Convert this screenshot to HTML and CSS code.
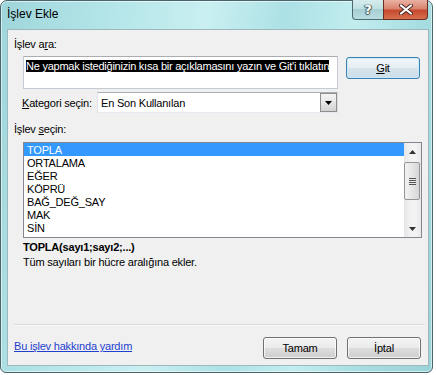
FILE: index.html
```html
<!DOCTYPE html>
<html lang="tr">
<head>
    <meta charset="UTF-8">
    <meta name="viewport" content="width=device-width, initial-scale=1.0">
    <title>İşlev Ekle</title>
    <link rel="stylesheet" href="styles.css">
</head>
<body>

    <div class="window">
        <div class="titlebar">
            <span class="title">İşlev Ekle</span>
            <div class="caption-buttons">
                <div class="cap-btn cap-help"><span>?</span></div>
                <div class="cap-btn cap-close">
                    <svg width="14" height="11" viewBox="0 0 14 11">
                        <path d="M2 1.5 L12 9.5 M12 1.5 L2 9.5" stroke="#4a2a24" stroke-width="4" stroke-linecap="round"/>
                        <path d="M2 1.5 L12 9.5 M12 1.5 L2 9.5" stroke="#fff" stroke-width="2.2" stroke-linecap="round"/>
                    </svg>
                </div>
            </div>
        </div>

        <div class="client">
            <div class="label">İşlev a<u>r</u>a:</div>

            <div class="search-row">
                <div class="search-box">
                    <span class="selected-text">Ne yapmak istediğinizin kısa bir açıklamasını yazın ve Git'i tıklatın</span>
                </div>
                <button class="btn btn-default"><u>G</u>it</button>
            </div>

            <div class="category-row">
                <span class="cat-label"><u>K</u>ategori seçin:</span>
                <div class="combo">
                    <span class="combo-text">En Son Kullanılan</span>
                    <span class="combo-arrow">
                        <svg width="7" height="4" viewBox="0 0 7 4"><path d="M0 0 H7 L3.5 4 Z" fill="#000"/></svg>
                    </span>
                </div>
            </div>

            <div class="label label-list">İşlev <u>s</u>eçin:</div>

            <div class="listbox">
                <ul class="items">
                    <li class="selected">TOPLA</li>
                    <li>ORTALAMA</li>
                    <li>EĞER</li>
                    <li>KÖPRÜ</li>
                    <li>BAĞ_DEĞ_SAY</li>
                    <li>MAK</li>
                    <li>SİN</li>
                </ul>
                <div class="scrollbar">
                    <div class="sb-arrow">
                        <svg width="7" height="4" viewBox="0 0 7 4"><path d="M0 4 H7 L3.5 0 Z" fill="#333"/></svg>
                    </div>
                    <div class="sb-track">
                        <div class="sb-thumb">
                            <div class="grip"></div>
                        </div>
                    </div>
                    <div class="sb-arrow">
                        <svg width="7" height="4" viewBox="0 0 7 4"><path d="M0 0 H7 L3.5 4 Z" fill="#333"/></svg>
                    </div>
                </div>
            </div>

            <div class="syntax">TOPLA(sayı1;sayı2;...)</div>
            <div class="desc">Tüm sayıları bir hücre aralığına ekler.</div>

            <div class="footer">
                <div class="separator"></div>
                <div class="footer-row">
                    <a class="help-link" href="#">Bu işlev hakkında yardım</a>
                    <div class="dialog-buttons">
                        <button class="btn">Tamam</button>
                        <button class="btn">İptal</button>
                    </div>
                </div>
            </div>
        </div>
    </div>

</body>
</html>
```

FILE: styles.css
```css
body {
    margin: 0;
    background-color: #fff;
    font-family: "Liberation Sans", Arial, sans-serif;
    font-size: 11px;
    letter-spacing: -0.2px;
    color: #000;
}

.window {
    box-sizing: border-box;
    width: 433px;
    height: 373px;
    border: 1px solid #4a666c;
    border-radius: 7px 7px 6px 6px;
    padding: 0 3px 6px 6px;
    display: flex;
    flex-direction: column;
    background: linear-gradient(100deg, #9fd6db 0%, #b3e5e8 22%, #c9eff1 42%, #ace1e5 58%, #c2edef 72%, #a6dde1 86%, #9ad3d8 100%);
    box-shadow: inset 0 0 0 1px rgba(255, 255, 255, 0.55);
}

/* title bar */
.titlebar {
    height: 28px;
    display: flex;
    justify-content: space-between;
    align-items: flex-start;
    flex-shrink: 0;
}

.title {
    margin-top: 6px;
    font-size: 12px;
    line-height: 15px;
    letter-spacing: 0;
}

.caption-buttons {
    display: flex;
    margin-top: -1px;
    margin-right: 1px;
}

.cap-btn {
    box-sizing: border-box;
    height: 20px;
    display: flex;
    align-items: center;
    justify-content: center;
    border: 1px solid #4d6a70;
    border-top: none;
}

.cap-help {
    width: 31px;
    border-radius: 0 0 0 4px;
    border-right: none;
    background: linear-gradient(#d6eced 0%, #bfdfe1 50%, #a7cfd3 50%, #b9dde0 100%);
}

.cap-help span {
    font-family: "DejaVu Sans", sans-serif;
    font-weight: bold;
    font-size: 13px;
    color: #fff;
    text-shadow: 0 0 1px #3c5558, 1px 0 1px #3c5558, -1px 0 1px #3c5558, 0 1px 1px #3c5558;
}

.cap-close {
    width: 45px;
    border-radius: 0 0 4px 0;
    border-color: #6b2d22;
    background: linear-gradient(#eab1a3 0%, #d98470 45%, #c64a2f 55%, #d8704f 100%);
}

/* client area */
.client {
    flex: 1;
    display: flex;
    flex-direction: column;
    background-color: #f0f0f0;
    border: 1px solid #9db8bc;
    padding: 7px 3px 6px 6px;
}

.label {
    line-height: 14px;
}

.label-list {
    margin-top: 9px;
}

.search-row {
    display: flex;
    align-items: flex-start;
    margin-top: 5px;
}

.search-box {
    box-sizing: border-box;
    width: 315px;
    height: 33px;
    margin-left: 9px;
    padding: 3px 2px 0 2px;
    background-color: #fff;
    border: 1px solid #c5cbd2;
    border-top-color: #abadb3;
    line-height: 13px;
    white-space: nowrap;
    overflow: hidden;
}

.selected-text {
    background-color: #000;
    color: #fff;
    letter-spacing: -0.24px;
}

.btn {
    box-sizing: border-box;
    width: 74px;
    height: 22px;
    padding: 0;
    font-family: inherit;
    font-size: 11px;
    letter-spacing: -0.2px;
    color: #000;
    border: 1px solid #707070;
    border-radius: 3px;
    background: linear-gradient(#f3f3f3 0%, #ebebeb 48%, #dddddd 52%, #cfcfcf 100%);
    box-shadow: inset 0 0 0 1px rgba(255, 255, 255, 0.7);
}

.btn-default {
    margin-left: 8px;
    margin-top: 1px;
    border-color: #3c7fb1;
    background: linear-gradient(#f1f6f9 0%, #e6eef3 48%, #d7e4ec 52%, #cddde7 100%);
    box-shadow: inset 0 0 0 1px rgba(200, 235, 252, 0.9);
}

.category-row {
    display: flex;
    align-items: center;
    margin-top: 3px;
    height: 21px;
}

.cat-label {
    width: 75px;
    margin-left: 8px;
}

.combo {
    box-sizing: border-box;
    width: 241px;
    height: 21px;
    display: flex;
    align-items: center;
    justify-content: space-between;
    background-color: #fff;
    border: 1px solid #abadb3;
    border-color: #abadb3 #dbdfe6 #e3e9ef #e2e3ea;
    padding: 0 0 0 3px;
}

.combo-arrow {
    box-sizing: border-box;
    width: 17px;
    height: 19px;
    display: flex;
    align-items: center;
    justify-content: center;
    border: 1px solid #8d8d8d;
    background: linear-gradient(#f4f4f4 0%, #e6e6e6 50%, #d2d2d2 100%);
}

/* function list */
.listbox {
    box-sizing: border-box;
    width: 399px;
    height: 96px;
    margin: 6px 0 0 9px;
    display: flex;
    background-color: #fff;
    border: 1px solid #828790;
}

.items {
    list-style: none;
    margin: 0;
    padding: 0;
    width: 380px;
}

.items li {
    height: 13px;
    line-height: 15px;
    padding-left: 3px;
}

.items li.selected {
    background-color: #3399ff;
    color: #fff;
}

.scrollbar {
    width: 17px;
    display: flex;
    flex-direction: column;
    background: linear-gradient(90deg, #e6e6e6, #f3f3f3 40%, #f3f3f3 70%, #e8e8e8);
}

.sb-arrow {
    height: 17px;
    display: flex;
    align-items: center;
    justify-content: center;
}

.sb-track {
    flex: 1;
}

.sb-thumb {
    box-sizing: border-box;
    height: 38px;
    margin: 2px 1px 0 0;
    border: 1px solid #959595;
    border-radius: 2px;
    background: linear-gradient(90deg, #f2f2f2, #e6e6e6 50%, #d6d6d6);
    display: flex;
    align-items: center;
    justify-content: center;
}

.grip {
    width: 7px;
    height: 7px;
    background: repeating-linear-gradient(#555 0, #555 1px, #e8e8e8 1px, #e8e8e8 2px);
}

.syntax {
    margin-top: 2px;
    line-height: 14px;
    font-weight: bold;
    margin-left: 9px;
}

.desc {
    margin-top: 1px;
    line-height: 14px;
    margin-left: 9px;
}

/* footer */
.footer {
    margin-top: auto;
}

.separator {
    height: 1px;
    background-color: #dcdcdc;
    border-bottom: 1px solid #fafafa;
}

.footer-row {
    display: flex;
    align-items: center;
    justify-content: space-between;
    margin-top: 11px;
    margin-right: 4px;
}

.help-link {
    color: #1f3fcf;
    margin-bottom: 4px;
}

.dialog-buttons {
    display: flex;
    gap: 10px;
}
```
